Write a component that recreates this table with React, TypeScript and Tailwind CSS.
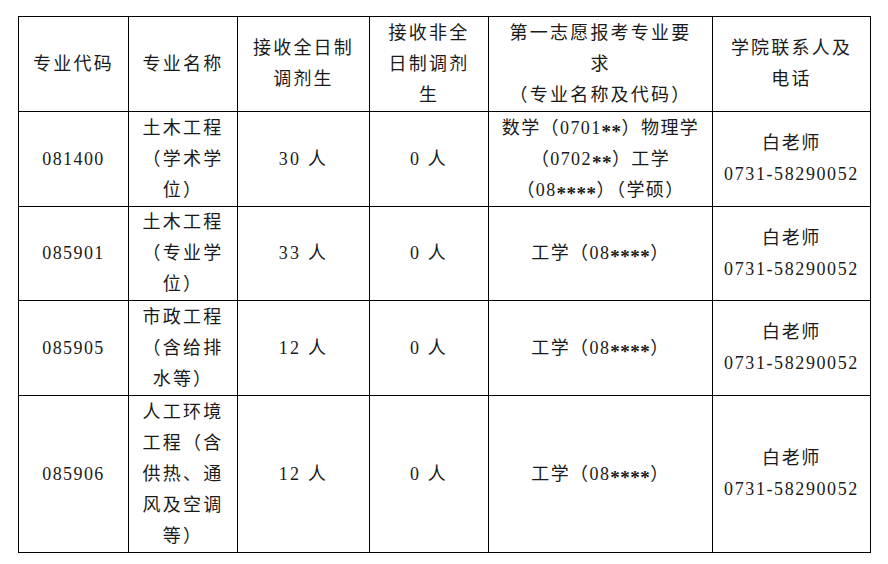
const Star = ({ n }: { n: number }) => (
  <span className="inline-block translate-y-[4px] font-bold text-[19px] leading-none tracking-[0.5px]">{'*'.repeat(n)}</span>
)

type Row = {
  code: string
  name: string[]
  full: string
  part: string
  req: React.ReactNode[]
  h: string
}

const rows: Row[] = [
  {
    code: '081400',
    name: ['土木工程', '（学术学', '位）'],
    full: '30 人',
    part: '0 人',
    req: [
      <>数学（0701<Star n={2} />）物理学</>,
      <>（0702<Star n={2} />）工学</>,
      <>（08<Star n={4} />）（学硕）</>,
    ],
    h: 'h-[95px]',
  },
  {
    code: '085901',
    name: ['土木工程', '（专业学', '位）'],
    full: '33 人',
    part: '0 人',
    req: [<>工学（08<Star n={4} />）</>],
    h: 'h-[94px]',
  },
  {
    code: '085905',
    name: ['市政工程', '（含给排', '水等）'],
    full: '12 人',
    part: '0 人',
    req: [<>工学（08<Star n={4} />）</>],
    h: 'h-[95px]',
  },
  {
    code: '085906',
    name: ['人工环境', '工程（含', '供热、通', '风及空调', '等）'],
    full: '12 人',
    part: '0 人',
    req: [<>工学（08<Star n={4} />）</>],
    h: 'h-[157px]',
  },
]

function Lines({ items }: { items: React.ReactNode[] }) {
  return (
    <>
      {items.map((t, i) => (
        <div key={i} className="whitespace-nowrap">{t}</div>
      ))}
    </>
  )
}

const cell = 'border border-black text-center align-middle p-0'

export default function App() {
  return (
    <div className="w-[888px] h-[564px] bg-white pt-4 pl-[18px] text-[18px] leading-[31px] tracking-[2.2px] text-[#1a1a1a] font-['Liberation_Serif','Noto_Sans_CJK_SC',serif]">
      <table className="border-collapse table-fixed w-[852px]">
        <colgroup>
          <col className="w-[110px]" />
          <col className="w-[109px]" />
          <col className="w-[132px]" />
          <col className="w-[119px]" />
          <col className="w-[224px]" />
          <col className="w-[158px]" />
        </colgroup>
        <thead>
          <tr className="h-[95px]">
            <th className={`${cell} font-normal`}>专业代码</th>
            <th className={`${cell} font-normal`}>专业名称</th>
            <th className={`${cell} font-normal`}>
              <Lines items={['接收全日制', '调剂生']} />
            </th>
            <th className={`${cell} font-normal`}>
              <Lines items={['接收非全', '日制调剂', '生']} />
            </th>
            <th className={`${cell} font-normal`}>
              <Lines items={['第一志愿报考专业要', '求', '（专业名称及代码）']} />
            </th>
            <th className={`${cell} font-normal`}>
              <Lines items={['学院联系人及', '电话']} />
            </th>
          </tr>
        </thead>
        <tbody>
          {rows.map((r) => (
            <tr key={r.code} className={r.h}>
              <td className={`${cell} tracking-[1.4px]`}>{r.code}</td>
              <td className={cell}>
                <Lines items={r.name} />
              </td>
              <td className={cell}>{r.full}</td>
              <td className={cell}>{r.part}</td>
              <td className={`${cell} tracking-[1.4px]`}>
                <Lines items={r.req} />
              </td>
              <td className={`${cell} tracking-[1.6px]`}>
                <Lines items={['白老师', '0731-58290052']} />
              </td>
            </tr>
          ))}
        </tbody>
      </table>
    </div>
  )
}
